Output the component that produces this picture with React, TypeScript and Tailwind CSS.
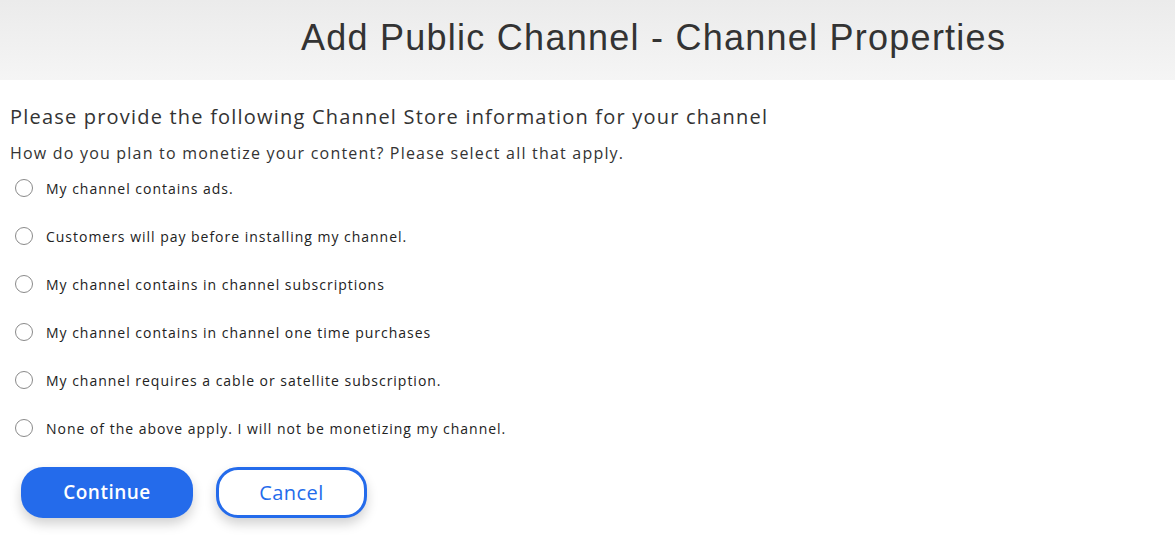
import React from "react";

const options = [
  "My channel contains ads.",
  "Customers will pay before installing my channel.",
  "My channel contains in channel subscriptions",
  "My channel contains in channel one time purchases",
  "My channel requires a cable or satellite subscription.",
  "None of the above apply. I will not be monetizing my channel.",
];

export default function App() {
  return (
    <div className="min-h-[555px] w-[1175px] bg-white text-[#333]">
      <div className="flex h-[80px] items-center bg-gradient-to-b from-[#ebebeb] to-[#f5f5f5] pb-[4px] pl-[301px]">
        <h1 className="font-['Liberation_Sans',sans-serif] text-[36px] font-light tracking-[1.25px] text-[#333]">
          Add Public Channel - Channel Properties
        </h1>
      </div>
      <div className="px-[10px] pt-[24px] font-['Open_Sans',sans-serif] tracking-[0.075em]">
        <h2 className="text-[20px] leading-[26px] text-[#333]">
          Please provide the following Channel Store information for your channel
        </h2>
        <p className="mt-[13px] text-[16px] leading-[20px] text-[#333]">
          How do you plan to monetize your content? Please select all that apply.
        </p>
        <div className="mt-[1px] flex flex-col">
          {options.map((o) => (
            <label key={o} className="flex h-[48px] items-center gap-[13px] pl-[5px]">
              <span className="h-[18px] w-[18px] shrink-0 rounded-full border border-[#8a8a8a] bg-white" />
              <span className="text-[14px] tracking-[0.07em] text-[#222]">{o}</span>
            </label>
          ))}
        </div>
        <div className="mt-[15px] flex gap-[23px] pl-[11px] tracking-[0.03em]">
          <button className="h-[51px] w-[172px] rounded-[22px] bg-[#246beb] text-[19px] font-semibold text-white shadow-[0_6px_12px_rgba(0,0,0,0.18)]">
            Continue
          </button>
          <button className="h-[51px] w-[151px] rounded-[22px] border-[3px] border-[#246beb] bg-white text-[20px] text-[#246beb] shadow-[0_6px_12px_rgba(0,0,0,0.18)]">
            Cancel
          </button>
        </div>
      </div>
    </div>
  );
}
